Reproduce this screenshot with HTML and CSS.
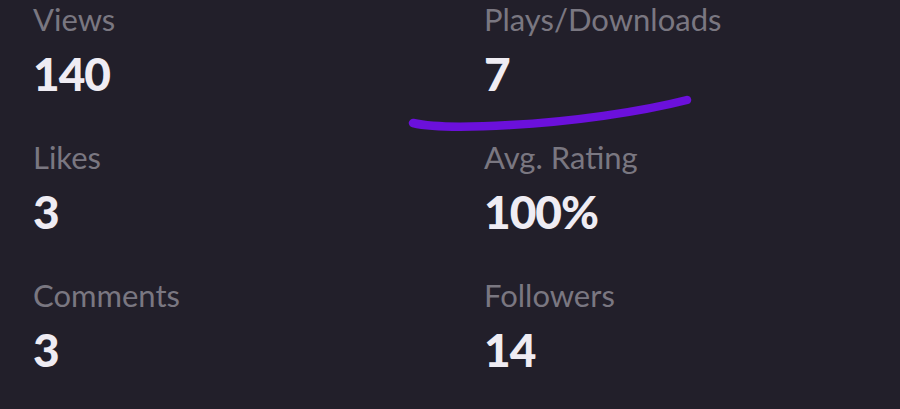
FILE: index.html
```html
<!DOCTYPE html>
<html lang="en">
<head>
<meta charset="utf-8">
<title>Stats</title>
<link rel="stylesheet" href="styles.css">
</head>
<body>
<main class="stats">
  <div class="stat">
    <div class="label">Views</div>
    <div class="value">140</div>
  </div>
  <div class="stat">
    <div class="label">Plays/Downloads</div>
    <div class="value">7</div>
  </div>
  <div class="stat">
    <div class="label">Likes</div>
    <div class="value">3</div>
  </div>
  <div class="stat">
    <div class="label">Avg. Rating</div>
    <div class="value">100%</div>
  </div>
  <div class="stat">
    <div class="label">Comments</div>
    <div class="value">3</div>
  </div>
  <div class="stat">
    <div class="label">Followers</div>
    <div class="value">14</div>
  </div>
</main>
<svg class="scribble" width="900" height="409" viewBox="0 0 900 409" aria-hidden="true">
  <path d="M413 123 C 430 127, 460 128, 510 125 C 570 122, 640 112, 687 100" fill="none" stroke="#6b10db" stroke-width="8.5" stroke-linecap="round"/>
</svg>
</body>
</html>
```
FILE: styles.css
```css
html, body {
  margin: 0;
  padding: 0;
  background: #221f2a;
  width: 900px;
  height: 409px;
  overflow: hidden;
}
body {
  position: relative;
  font-family: "Lato", "Noto Sans", sans-serif;
}
.stats {
  display: grid;
  grid-template-columns: 451px 1fr;
  row-gap: 41px;
  padding: 0 0 0 33px;
}
.stat {
  display: flex;
  flex-direction: column;
}
.label {
  font-size: 31px;
  line-height: 38px;
  font-weight: 400;
  color: #7a7781;
}
.value {
  margin-top: 13px;
  font-size: 46px;
  line-height: 46px;
  font-weight: 900;
  letter-spacing: -1px;
  color: #efecf3;
}
.scribble {
  position: absolute;
  left: 0;
  top: 0;
  pointer-events: none;
}
```
